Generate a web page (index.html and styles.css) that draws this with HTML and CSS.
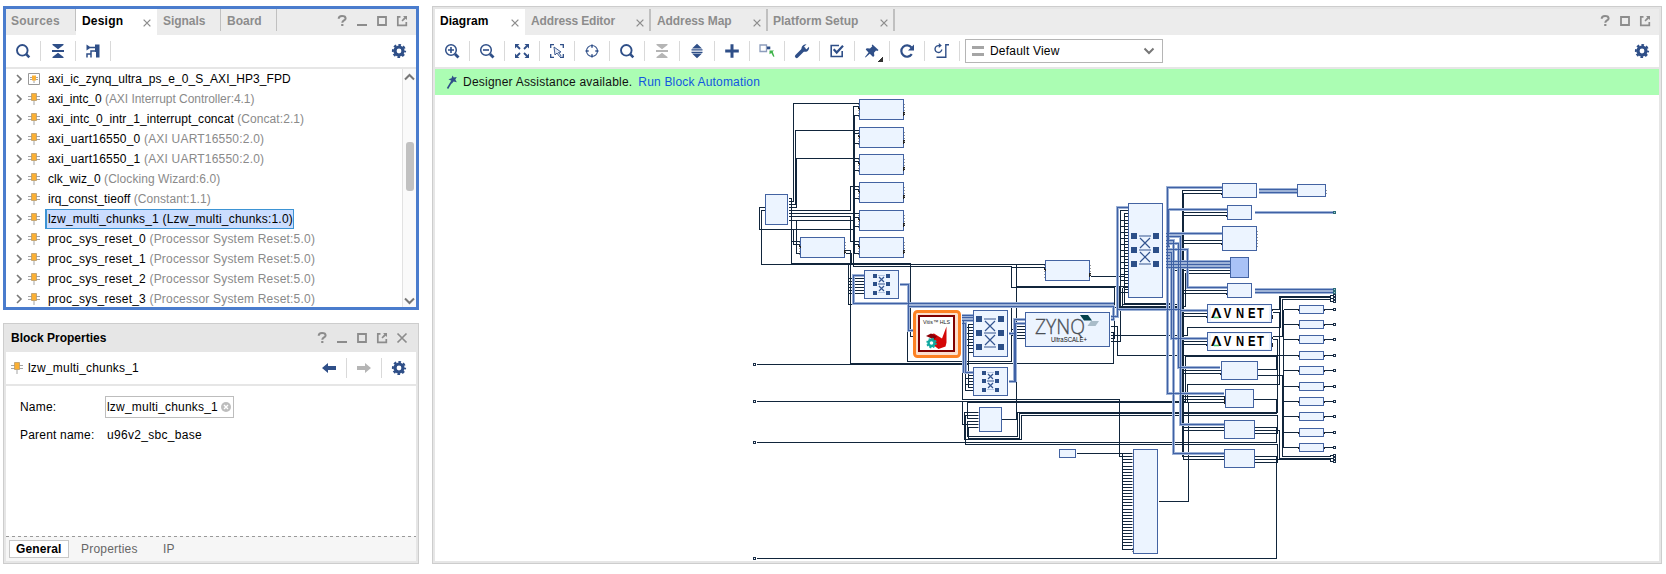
FILE: index.html
```
<!DOCTYPE html>
<html lang="en">
<head>
<meta charset="utf-8">
<title>Block Design</title>
<link rel="stylesheet" href="styles.css">
</head>
<body>
<svg class="sprite" width="0" height="0" aria-hidden="true">
  <defs>
    <symbol id="i-search" viewBox="0 0 16 16"><circle cx="7.3" cy="7.3" r="5.3" fill="none" stroke="currentColor" stroke-width="1.900"/><path d="M11.2 11.2L14.3 14.3" stroke="currentColor" stroke-width="2.600"/></symbol>
    <symbol id="i-zoomin" viewBox="0 0 16 16"><circle cx="7" cy="7" r="5.3" fill="none" stroke="currentColor" stroke-width="1.5"/><path d="M11 11L14.5 14.5" stroke="currentColor" stroke-width="2.8"/><path d="M4 7h6M7 4v6" stroke="currentColor" stroke-width="1.6"/></symbol>
    <symbol id="i-zoomout" viewBox="0 0 16 16"><circle cx="7" cy="7" r="5.3" fill="none" stroke="currentColor" stroke-width="1.5"/><path d="M11 11L14.5 14.5" stroke="currentColor" stroke-width="2.8"/><path d="M4 7h6" stroke="currentColor" stroke-width="1.6"/></symbol>
    <symbol id="i-collapse" viewBox="0 0 16 16"><path d="M2.5 1h11v1L8 6.2 2.5 2zM2.5 15h11v-1L8 9.8 2.500 14z" fill="currentColor"/><path d="M2 8h12" stroke="currentColor" stroke-width="2"/></symbol>
    <symbol id="i-expand" viewBox="0 0 16 16"><path d="M8 .8L13 5.500H3zM8 15.200L13 10.500H3z" fill="currentColor"/><path d="M2.500 6.900h11M2.500 9.300h11" stroke="currentColor" stroke-width="1.300"/></symbol>
    <symbol id="i-hier" viewBox="0 0 16 16"><path d="M1.500 1.500v6L6 4.500z" fill="currentColor"/><path d="M5 4.500h5M2 14.500V11h4v3.500M6 11V8h4" fill="none" stroke="currentColor" stroke-width="1.500"/><path d="M10 1.500h4.500v13H11V9H10z" fill="currentColor"/></symbol>
    <symbol id="i-fit" viewBox="0 0 16 16"><path d="M1 1h4.500L1 5.500zM15 1h-4.500L15 5.500zM1 15h4.500L1 10.500zM15 15h-4.500l4.500-4.500z" fill="currentColor"/><path d="M3 3l3 3M13 3l-3 3M3 13l3-3M13 13l-3-3" stroke="currentColor" stroke-width="1.800"/></symbol>
    <symbol id="i-select" viewBox="0 0 16 16"><path d="M1.700 5V1.700H5M11 1.700h3.300V5M1.700 11v3.300H5M14.300 11v3.300H11" fill="none" stroke="currentColor" stroke-width="1.300"/><path d="M5 4l1 8 2-2 2.500 3.500 1.500-1-2.500-3L12 9z" fill="#e5eaf4" stroke="currentColor" stroke-width=".9"/></symbol>
    <symbol id="i-target" viewBox="0 0 16 16"><circle cx="8" cy="8" r="5.500" fill="none" stroke="currentColor" stroke-width="1.100"/><path d="M8 1.500v3.200M8 11.300v3.200M1.500 8h3.200M11.300 8h3.200" stroke="currentColor" stroke-width="1.500"/></symbol>
    <symbol id="i-plus" viewBox="0 0 16 16"><path d="M8 1.200v13.600M1.200 8h13.600" stroke="currentColor" stroke-width="3"/></symbol>
    <symbol id="i-addip" viewBox="0 0 16 16"><path d="M1 2h6.500v6.500H1z" fill="none" stroke="#8d9dbc" stroke-width="1.300"/><path d="M8 3.500h3.300v2.800H8z" fill="currentColor"/><path d="M10.500 7.500H15l-1.300 1.300 1.800 4.700-1.200.3-2-3.800-1.800 1.300z" fill="#3eb34a"/></symbol>
    <symbol id="i-wrench" viewBox="0 0 16 16"><path d="M2.700 13.300L10 6" stroke="currentColor" stroke-width="3.600" stroke-linecap="round"/><path d="M12.500 1.200L10 3.700l.5 2 2 .5L15 3.700c.6 3-1.500 5.300-4.200 5C7 8 7 5 8.200 3.200 9.200 1.700 11 1 12.500 1.200z" fill="currentColor"/></symbol>
    <symbol id="i-check" viewBox="0 0 16 16"><path d="M13.200 8v5.500H2.200v-11H10" fill="none" stroke="currentColor" stroke-width="1.600"/><path d="M4.700 6.200l3 3.300L14 2.700" fill="none" stroke="currentColor" stroke-width="2.200"/></symbol>
    <symbol id="i-pin" viewBox="0 0 16 16"><path d="M8.500 1.500l6 5.500-1 1-1.500-.4-2 2.200.3 3-1.200 1.200-3.300-3.300L1.500 14.500 1 14l3.500-4.500L1.700 6.500l1-1.200 3.300.200 2.300-2.200-.6-1z" fill="currentColor"/></symbol>
    <symbol id="i-refresh" viewBox="0 0 16 16"><path d="M12.800 11.200A5.700 5.700 0 1 1 12.500 4.500" fill="none" stroke="currentColor" stroke-width="2.200"/><path d="M15 1.500V7.500H9z" fill="currentColor"/></symbol>
    <symbol id="i-route" viewBox="0 0 16 16"><path d="M7.800 6.500A3.400 3.400 0 1 1 5 2.700M15 1.700h-3.200v12.600H2.500" fill="none" stroke="currentColor" stroke-width="1.400"/><path d="M4.800 0l3 2.600-3 2.400z" fill="currentColor"/></symbol>
    <symbol id="i-gear" viewBox="0 0 16 16"><circle cx="8" cy="8" r="4" fill="none" stroke="currentColor" stroke-width="3.200"/><circle cx="8" cy="8" r="6.100" fill="none" stroke="currentColor" stroke-width="2" stroke-dasharray="2.600 2.191" stroke-dashoffset="1.300"/></symbol>
    <symbol id="i-back" viewBox="0 0 16 16"><path d="M1 8l6-5v3h8v4H7v3z" fill="currentColor"/></symbol>
    <symbol id="i-fwd" viewBox="0 0 16 16"><path d="M15 8L9 3v3H1v4h8v3z" fill="currentColor"/></symbol>
    <symbol id="i-help" viewBox="0 0 16 16"><path d="M4.700 5.800C4.700 3.500 6 3 8 3s3.600.6 3.600 2.400c0 2-3.300 2-3.300 4.300" fill="none" stroke="currentColor" stroke-width="2"/><path d="M7.200 11h2.200v2H7.200z" fill="currentColor"/></symbol>
    <symbol id="i-min" viewBox="0 0 16 16"><path d="M3 12h10" stroke="currentColor" stroke-width="2"/></symbol>
    <symbol id="i-max" viewBox="0 0 16 16"><path d="M4 4h8v8H4z" fill="none" stroke="currentColor" stroke-width="1.800"/></symbol>
    <symbol id="i-ext" viewBox="0 0 16 16"><path d="M6.500 3.800H3.800v8.500h8.500V9" fill="none" stroke="currentColor" stroke-width="1.700"/><path d="M9 3h4v4l-1.300-1.300L8.500 8.500 7.500 7.500l2.800-3.200z" fill="currentColor"/></symbol>
    <symbol id="i-close" viewBox="0 0 16 16"><path d="M3.500 3.500l9 9M12.500 3.500l-9 9" stroke="currentColor" stroke-width="1.700"/></symbol>
    <symbol id="i-chev" viewBox="0 0 8 10"><path d="M2 1l4 4-4 4" fill="none" stroke="#777" stroke-width="1.600"/></symbol>
    <symbol id="i-ip" viewBox="0 0 12 12"><path d="M0 3.500h12M0 6.500h12M6 8v4" stroke="#a5a5a5" stroke-width="1"/><path d="M3.500.5h5v7h-5z" fill="#fbb034" stroke="#b89a6a" stroke-width=".8"/></symbol>
    <symbol id="i-hip" viewBox="0 0 12 12"><path d="M.5.500h11v11H.5z" fill="#fff" stroke="#999"/><path d="M2 4.500h8M2 6.500h8M6 7v3" stroke="#999" stroke-width=".9"/><path d="M4 2.500h4v5H4z" fill="#fbb034"/></symbol>
    <symbol id="i-wand" viewBox="0 0 12 14"><path d="M1.500 13.500L6 6" stroke="currentColor" stroke-width="1.600"/><path d="M6.500.5l1.300 2 3-.6-1.500 2.600 1.500 2.700-3.200-.7L5.500 9 5.300 5.700 2.500 4.300l3-1z" fill="currentColor"/></symbol>
  </defs>
</svg>

<div class="app">
  <div class="side">
    <section class="panel design">
      <header class="tabs">
        <div class="tab t-sources">Sources</div>
        <div class="tab active t-design">Design<svg class="x"><use href="#i-close"/></svg></div>
        <div class="tab t-signals">Signals</div>
        <div class="tab t-board">Board</div>
        <div class="win"><svg><use href="#i-help"/></svg><svg><use href="#i-min"/></svg><svg><use href="#i-max"/></svg><svg><use href="#i-ext"/></svg></div>
      </header>
      <div class="toolbar">
        <span class="btn"><svg><use href="#i-search"/></svg></span>
        <span class="btn"><svg><use href="#i-collapse"/></svg></span>
        <span class="btn"><svg><use href="#i-hier"/></svg></span>
        <span class="gear"><svg><use href="#i-gear"/></svg></span>
      </div>
      <div class="treewrap">
        <ul class="tree">
          <li class="snug"><svg class="chev"><use href="#i-chev"/></svg><svg class="ip"><use href="#i-hip"/></svg><span class="lbl">axi_ic_zynq_ultra_ps_e_0_S_AXI_HP3_FPD</span></li>
          <li class="tight"><svg class="chev"><use href="#i-chev"/></svg><svg class="ip"><use href="#i-ip"/></svg><span class="lbl">axi_intc_0 <i>(AXI Interrupt Controller:4.1)</i></span></li>
          <li class="snug"><svg class="chev"><use href="#i-chev"/></svg><svg class="ip"><use href="#i-ip"/></svg><span class="lbl">axi_intc_0_intr_1_interrupt_concat <i>(Concat:2.1)</i></span></li>
          <li><svg class="chev"><use href="#i-chev"/></svg><svg class="ip"><use href="#i-ip"/></svg><span class="lbl">axi_uart16550_0 <i>(AXI UART16550:2.0)</i></span></li>
          <li><svg class="chev"><use href="#i-chev"/></svg><svg class="ip"><use href="#i-ip"/></svg><span class="lbl">axi_uart16550_1 <i>(AXI UART16550:2.0)</i></span></li>
          <li class="snug"><svg class="chev"><use href="#i-chev"/></svg><svg class="ip"><use href="#i-ip"/></svg><span class="lbl">clk_wiz_0 <i>(Clocking Wizard:6.0)</i></span></li>
          <li class="snug"><svg class="chev"><use href="#i-chev"/></svg><svg class="ip"><use href="#i-ip"/></svg><span class="lbl">irq_const_tieoff <i>(Constant:1.1)</i></span></li>
          <li><svg class="chev"><use href="#i-chev"/></svg><svg class="ip"><use href="#i-ip"/></svg><span class="lbl sel">lzw_multi_chunks_1 (Lzw_multi_chunks:1.0)</span></li>
          <li><svg class="chev"><use href="#i-chev"/></svg><svg class="ip"><use href="#i-ip"/></svg><span class="lbl">proc_sys_reset_0 <i>(Processor System Reset:5.0)</i></span></li>
          <li><svg class="chev"><use href="#i-chev"/></svg><svg class="ip"><use href="#i-ip"/></svg><span class="lbl">proc_sys_reset_1 <i>(Processor System Reset:5.0)</i></span></li>
          <li><svg class="chev"><use href="#i-chev"/></svg><svg class="ip"><use href="#i-ip"/></svg><span class="lbl">proc_sys_reset_2 <i>(Processor System Reset:5.0)</i></span></li>
          <li><svg class="chev"><use href="#i-chev"/></svg><svg class="ip"><use href="#i-ip"/></svg><span class="lbl">proc_sys_reset_3 <i>(Processor System Reset:5.0)</i></span></li>
        </ul>
        <div class="scroll">
          <svg viewBox="0 0 13 8"><path d="M2 6.500l4.500-4.500 4.500 4.500" /></svg>
          <div class="thumb"></div>
          <svg viewBox="0 0 13 8"><path d="M2 1.500l4.500 4.500 4.500-4.500"/></svg>
        </div>
      </div>
    </section>

    <section class="panel props">
      <header class="phead"><b>Block Properties</b>
        <div class="win"><svg><use href="#i-help"/></svg><svg><use href="#i-min"/></svg><svg><use href="#i-max"/></svg><svg><use href="#i-ext"/></svg><svg><use href="#i-close"/></svg></div>
      </header>
      <div class="toolbar ptool">
        <svg class="ip"><use href="#i-ip"/></svg><span class="pname">lzw_multi_chunks_1</span>
        <span class="btn nav"><svg><use href="#i-back"/></svg></span>
        <span class="btn off"><svg><use href="#i-fwd"/></svg></span>
        <span class="gear"><svg><use href="#i-gear"/></svg></span>
      </div>
      <div class="form">
        <span>Name:</span><span class="field">lzw_multi_chunks_1<svg viewBox="0 0 10 10"><circle cx="5" cy="5" r="5" fill="#bdbdbd"/><path d="M3 3l4 4M7 3l-4 4" stroke="#fff" stroke-width="1.400"/></svg></span>
        <span>Parent name:</span><span class="val">u96v2_sbc_base</span>
      </div>
      <footer class="ptabs"><span class="on">General</span><span class="p2">Properties</span><span class="p3">IP</span></footer>
    </section>
  </div>

  <section class="panel main">
    <header class="tabs">
      <div class="tab active d1">Diagram<svg class="x"><use href="#i-close"/></svg></div>
      <div class="tab d2">Address Editor<svg class="x"><use href="#i-close"/></svg></div>
      <div class="tab d3">Address Map<svg class="x"><use href="#i-close"/></svg></div>
      <div class="tab d4">Platform Setup<svg class="x"><use href="#i-close"/></svg></div>
      <div class="win"><svg><use href="#i-help"/></svg><svg><use href="#i-max"/></svg><svg><use href="#i-ext"/></svg></div>
    </header>
    <div class="toolbar">
      <span class="btn"><svg><use href="#i-zoomin"/></svg></span>
      <span class="btn"><svg><use href="#i-zoomout"/></svg></span>
      <span class="btn"><svg><use href="#i-fit"/></svg></span>
      <span class="btn"><svg><use href="#i-select"/></svg></span>
      <span class="btn"><svg><use href="#i-target"/></svg></span>
      <span class="btn"><svg><use href="#i-search"/></svg></span>
      <span class="btn off"><svg><use href="#i-collapse"/></svg></span>
      <span class="btn"><svg><use href="#i-expand"/></svg></span>
      <span class="btn"><svg><use href="#i-plus"/></svg></span>
      <span class="btn"><svg><use href="#i-addip"/></svg></span>
      <span class="btn"><svg><use href="#i-wrench"/></svg></span>
      <span class="btn"><svg><use href="#i-check"/></svg></span>
      <span class="btn more"><svg><use href="#i-pin"/></svg></span>
      <span class="btn"><svg><use href="#i-refresh"/></svg></span>
      <span class="btn"><svg><use href="#i-route"/></svg></span>
      <div class="combo"><span class="bars"></span><span>Default View</span><svg viewBox="0 0 12 8"><path d="M1.500 1.500L6 6l4.500-4.500"/></svg></div>
      <span class="gear"><svg><use href="#i-gear"/></svg></span>
    </div>
    <div class="assist"><svg><use href="#i-wand"/></svg><span class="a1">Designer Assistance available.</span><span class="a2">Run Block Automation</span></div>
    <svg class="canvas" viewBox="435 95 1224 466">
      <defs>
        <g id="bus">
          <path d="M864 275H853V303H1113M899 284H908V330H912M908 306H1113V319H1110"/>
          <path d="M961 315H972M961 317H972M961 320H972M961 323H965V372H972M963 320V372"/>
          <path d="M1008 381H1014V319H1025M1015 381V323H1025M1008 333H1013"/>
          <path d="M1128 207H1117V316H1110M1117 309H1180"/>
          <path d="M1222 187H1167V393H1223M1227 209H1168V246M1165 233H1222M1165 236H1180V424H1223"/>
          <path d="M1165 240H1173V453H1223M1165 243H1178V367H1219M1165 249H1187V287H1227"/>
          <path d="M1165 252H1171V338H1206M1165 246H1169M1165 255H1169M1165 258H1169M1165 261H1229M1165 264H1229M1165 267H1229M1180 310H1206"/>
          <path d="M1258 189H1297M1258 192H1297M1254 212H1333M1254 289H1333M1254 292H1333"/>
        </g>
        <g id="mem">
          <rect class="blk" width="44" height="20" rx="1"/>
          <path class="pg" d="M-1 4v13M45 4v12"/>
          <path class="pk" d="M-2 9h2M-1 10h1M-1 7v1M43 13h2M43 15h2M44 12v4"/>
        </g>
        <g id="io">
          <path class="w" d="M-3 4h2M25 4h9"/>
          <path class="pk" d="M-1 3v2M25 3v2"/>
          <rect class="blk" width="24" height="8"/>
          <rect class="port" x="34" y="3" width="2" height="2"/>
        </g>
        <g id="xbig">
          <path class="sq" d="M0 0h6v6H0zM22 0h6v6h-6zM0 14h6v6H0zM22 14h6v6h-6zM0 28h6v6H0zM22 28h6v6h-6z"/>
          <path class="xl" d="M8 3h12M8 17h12M8 31h12M9 5l10 10M19 5L9 15M9 19l10 10M19 19L9 29"/>
        </g>
        <g id="xsmall">
          <path class="sq" d="M0 0h4v4H0zM13 0h4v4h-4zM0 8h4v4H0zM13 8h4v4h-4zM0 17h4v4H0zM13 17h4v4h-4z"/>
          <path class="xf" d="M5 1.500h7M5 18.500h7"/>
          <path class="xl" d="M5 10h7M6 3l5 5M11 3L6 8M6 12l5 5M11 12L6 17"/>
        </g>
      </defs>
      <g transform="translate(.5 .5)" shape-rendering="crispEdges">
        <g class="w">
          <path d="M788 198H791V263H910V336H913M788 201H793V103H858M788 204H795V130H858M788 207H796V158H858M788 210H850V186H858M788 213H858M788 216H850V241H858M788 220H853M796 220V253H800M793 229V244H799M791 241H799"/>
          <path d="M765 207H759V229H853M765 210H761V264H1044M858 106H853V266H1011V287H1114V338H1110M858 115H854V253H858"/>
          <path d="M853 133h5M854 143h4M853 161h5M854 170h4M853 189h5M854 198h4M853 217h5M854 226h4M853 244h5"/>
          <path d="M845 250H850V363H1113V332H1110M845 253H851V264M848 263V304H853M907 304V361H1011V307H1183"/>
          <path d="M848 278h16m-16 3h16m-16 3h16m-16 3h16m-16 3h16m-16 3h16"/>
          <path d="M973 324H968V387H973M973 327H965V390H973M968 330h5m-8 3h8m-5 3h5m-8 3h8m-5 3h5m-8 3h8m-5 3h5m-5 4h5M968 375h5m-8 3h8m-5 3h5m-8 3h8"/>
          <path d="M961 349H962V399H1119V456H1132M962 401V424H978M756 364H968V352M756 401H1185M979 418H967V402H1187M756 442H1276V427H1254M756 558H1276V456H1254"/>
          <path d="M979 412H964V439H1021V415H1277V433H1254M979 415H965V444H1277V462H1254M979 421H967V436H1017V412H1277V339H1272M979 427H968V438H1019V413H1276V399H1253M1001 419H1016V338H1025M1016 264V326H1025M1011 329h14m-14 3h14m-14 3h14"/>
          <path d="M1011 267H1044M1016 286H1119V306H1185V273H1230M1090 276H1124M1128 210H1120V341H1110M1128 213H1124V303H1174V270H1230M1122 287V306M1122 304H1183M1122 287H1128M1119 286V307"/>
          <path d="M1124 216h4m-8 4h8m-4 3h4m-8 3h8m-4 3h4m-8 3h8m-4 3h4m-8 3h8m-4 3h4m-8 3h8m-4 3h4m-8 3h8m-4 3h4m-8 3h8m-4 3h4m-8 3h8m-4 3h4m-8 3h8m-4 3h4m-8 3h8m-4 3h4m-8 3h8m-4 3h4m-8 3h8m-4 3h4m-8 3h8"/>
          <path d="M1222 190H1182V456H1224M1222 193H1183V459H1224M1183 212h44m-44 3h44M1183 240h39m-39 3h39M1183 290h44m-44 3h44M1183 313h24m-24 3h24M1183 341h24m-24 3h24M1183 370h38m-38 3h38M1183 396h42m-42 3h42M1183 402h42M1183 427h41m-41 3h41"/>
          <path d="M1110 335H1187V327H1280V297H1330V298H1333M1110 326H1117V355H1299M1272 309H1279V296H1330V295H1333M1272 312H1279V384H1187V401M1272 336H1282V299H1330V301H1333"/>
          <path d="M1257 369H1276V356H1185V402M1257 375H1282V456H1330V455H1333M1283 309V447M1283 309h13m-13 15h13m-13 15h13m-13 31h13m-13 16h13m-13 15h13m-13 15h13m-13 16h13m-13 15h13"/>
          <path d="M1254 430H1279V458H1333M1254 459H1330V461H1333M1158 501H1188V402M1076 453H1132M1122 453V549"/>
          <path d="M1122 459h10m-10 3h10m-10 4h10m-10 3h10m-10 3h10m-10 3h10m-10 3h10m-10 3h10m-10 3h10m-10 3h10m-10 3h10m-10 3h10m-10 3h10m-10 3h10m-10 3h10m-10 3h10m-10 4h10m-10 3h10m-10 3h10m-10 3h10m-10 3h10m-10 3h10m-10 3h10m-10 3h10m-10 3h10m-10 3h10m-10 3h10m-10 3h10m-10 3h10m-10 4h10"/>
        </g>
        <use href="#bus" class="halo"/><use href="#bus" class="core"/>

        <use href="#mem" x="859" y="99"/><use href="#mem" x="859" y="127"/><use href="#mem" x="859" y="154"/>
        <use href="#mem" x="859" y="182"/><use href="#mem" x="859" y="210"/><use href="#mem" x="859" y="237"/>
        <use href="#mem" x="800" y="237"/><use href="#mem" x="1045" y="260"/>

        <g class="blk">
          <rect x="765" y="194" width="22" height="30" rx="1"/>
          <rect x="864" y="270" width="34" height="28" rx="1"/>
          <rect x="973" y="310" width="34" height="46" rx="1"/>
          <rect x="973" y="367" width="34" height="28" rx="1"/>
          <rect x="979" y="407" width="22" height="24" rx="1"/>
          <rect x="1025" y="312" width="84" height="34" rx="1"/>
          <rect x="1128" y="203" width="34" height="94"/>
          <rect x="1222" y="183" width="34" height="14"/>
          <rect x="1297" y="184" width="28" height="12"/>
          <rect x="1227" y="205" width="24" height="14"/>
          <rect x="1222" y="226" width="34" height="24"/>
          <rect x="1230" y="257" width="18" height="20" class="picked"/>
          <rect x="1227" y="283" width="24" height="14"/>
          <rect x="1207" y="304" width="64" height="18"/>
          <rect x="1207" y="332" width="64" height="18"/>
          <rect x="1221" y="361" width="36" height="18"/>
          <rect x="1225" y="389" width="28" height="18"/>
          <rect x="1224" y="420" width="30" height="18"/>
          <rect x="1224" y="449" width="30" height="18"/>
          <rect x="1133" y="449" width="24" height="104"/>
          <rect x="1059" y="449" width="16" height="8" rx="1"/>
        </g>
        <path class="pg" d="M978 411v18M1132 452v11M1132 465v41M1132 508v43M1257 230v18M1326 189v4"/>
        <path class="pk" d="M1221 193v1M1226 215v1M1221 243v1M1226 293v1M1206 316v1M1206 344v1M1220 373v1M1224 396v7M1272 314v4M1272 342v4M1272 308v2M1272 336v2M1158 501h2"/>

        <use href="#io" x="1299" y="305"/><use href="#io" x="1299" y="320"/><use href="#io" x="1299" y="335"/><use href="#io" x="1299" y="351"/><use href="#io" x="1299" y="366"/>
        <use href="#io" x="1299" y="382"/><use href="#io" x="1299" y="397"/><use href="#io" x="1299" y="412"/><use href="#io" x="1299" y="428"/><use href="#io" x="1299" y="443"/>
        <g class="port">
          <rect x="753" y="363" width="2" height="2"/><rect x="753" y="400" width="2" height="2"/><rect x="753" y="441" width="2" height="2"/><rect x="753" y="557" width="2" height="2"/>
          <rect x="1333" y="211" width="2" height="2" class="busport"/><rect x="1333" y="288" width="2" height="2" class="busport"/><rect x="1333" y="291" width="2" height="2" class="busport"/><rect x="1333" y="294" width="2" height="2"/><rect x="1333" y="297" width="2" height="2"/><rect x="1333" y="300" width="2" height="2"/>
          <rect x="1333" y="454" width="2" height="2"/><rect x="1333" y="457" width="2" height="2"/><rect x="1333" y="460" width="2" height="2"/>
        </g>
      </g>
      <use href="#xsmall" x="873" y="274"/>
      <use href="#xsmall" x="982" y="371"/>
      <use href="#xbig" x="976" y="316"/>
      <use href="#xbig" x="1131" y="233"/>

      <rect x="914.500" y="311.500" width="45" height="45" rx="3" fill="#fbe0cf" stroke="#fd8224" stroke-width="3"/>
      <rect x="919" y="316" width="35" height="35" fill="#fff" stroke="#800000" stroke-width="2"/>
      <text x="923" y="324" class="vitis" textLength="27" lengthAdjust="spacingAndGlyphs">Vitis™ HLS</text>
      <path d="M930 334.500l4-1 8 5 4.500-12v16l-1 4-7 2.500-4-3z" fill="#d40808"/><path d="M926 336l5-2.500 6 3-3 3z" fill="#8a0008"/>
      <circle cx="931.500" cy="343" r="3" fill="#fff" stroke="#10a8a0" stroke-width="2.400"/><circle cx="931.500" cy="343" r="4.500" fill="none" stroke="#10a8a0" stroke-width="1.500" stroke-dasharray="1.900 1.630"/>

      <text x="1035" y="334.300" class="zynq" textLength="50" lengthAdjust="spacingAndGlyphs">ZYNQ</text>
      <text x="1051" y="342" class="ultra" textLength="36" lengthAdjust="spacingAndGlyphs">UltraSCALE+</text>
      <path d="M1080 315h8l4 5.500h-8z" fill="#04414c"/><path d="M1091 321h8l-3.500 5h-8z" fill="#a9bcc9"/>

      <g fill="#fff"><rect x="1211" y="306" width="58" height="15"/><rect x="1211" y="334" width="58" height="15"/></g>
      <text class="avnet" transform="translate(1211 318) scale(.75 1)"><tspan x="0" textLength="14" lengthAdjust="spacingAndGlyphs">Λ</tspan><tspan x="17 33.300 49.300 61.500">VNET</tspan></text>
      <text class="avnet" transform="translate(1211 346) scale(.75 1)"><tspan x="0" textLength="14" lengthAdjust="spacingAndGlyphs">Λ</tspan><tspan x="17 33.300 49.300 61.500">VNET</tspan></text>
      <path d="M1214 317.500h5M1214 345.500h5" stroke="#45c063" stroke-width="1.600"/>
    </svg>
  </section>
</div>
</body>
</html>
```
FILE: styles.css
```
* { box-sizing: border-box; }
body {
  margin: 0;
  background: #fff;
  font: 12px/20px "Liberation Sans", Arial, sans-serif;
  letter-spacing: .2px;
  color: #000;
}
.sprite { display: block; }
.app { display: flex; gap: 13px; padding: 6px 0 0 3px; height: 574px; }
.side { display: flex; flex-direction: column; gap: 13px; width: 416px; }
svg { display: block; flex: none; }

.panel {
  display: flex;
  flex-direction: column;
  background: #fff;
  overflow: hidden;
}
.design { height: 304px; border: 3px solid #4a7ccd; }
.props { height: 241px; border: 1px solid #cdcdcd; box-shadow: inset 0 0 0 2px #e6e6e6; padding: 2px; }
.main { width: 1230px; height: 558px; border: 1px solid #cdcdcd; box-shadow: inset 0 0 0 2px #e6e6e6; padding: 2px; }

.tabs { display: flex; height: 26px; background: #ececec; flex: none; }
.tab {
  position: relative;
  height: 22px;
  line-height: 24px;
  padding-left: 6px;
  font-weight: bold;
  color: #8c8c8c;
  border-right: 1px solid #c0c0c0;
  white-space: nowrap;
}
.tab.active { height: 26px; background: #fff; color: #000; border-right: 0; }
.t-sources { width: 70px; padding-left: 5px; }
.t-design { width: 81px; }
.t-signals { width: 64px; letter-spacing: -.05px; }
.t-board { width: 56px; letter-spacing: 0; }
.d1 { width: 90px; padding-left: 5px; letter-spacing: .05px; }
.main .tab:not(.active) { border-right-width: 2px; }
.d2 { width: 126px; letter-spacing: -.15px; }
.d3 { width: 117px; letter-spacing: -.08px; }
.d4 { width: 127px; padding-left: 5px; letter-spacing: 0; }
.tab .x { position: absolute; right: 3px; top: 8px; width: 12px; height: 12px; color: #8c8c8c; }
.t-design .x, .d1 .x { right: 4px; }

.win { margin-left: auto; display: flex; gap: 4px; align-items: center; padding-right: 6px; color: #8c8c8c; }
.win svg { width: 16px; height: 16px; margin-top: -2px; }

.toolbar {
  display: flex;
  align-items: center;
  height: 34px;
  flex: none;
  border-bottom: 2px solid #e6e6e6;
  color: #2f4f88;
}
.btn { width: 35px; height: 20px; display: flex; align-items: center; justify-content: center; border-right: 1px solid #d9d9d9; position: relative; }
.btn svg, .gear svg { width: 16px; height: 16px; }
.btn.off { color: #b5b5b5; }
.btn.more::after { content: ""; position: absolute; right: 6px; bottom: -1px; width: 5px; height: 5px; background: linear-gradient(135deg, transparent 50%, #333 50%); }
.gear { margin-left: auto; margin-right: 9px; }

.treewrap { display: flex; flex: 1; min-height: 0; }
.tree { list-style: none; margin: 0; padding: 0; flex: 1; overflow: hidden; }
.tree li { display: flex; align-items: center; height: 20px; white-space: nowrap; }
.tree .snug { letter-spacing: .07px; }
.tree .tight { letter-spacing: -.04px; }
.chev { width: 8px; height: 10px; margin-left: 9px; margin-right: 5px; }
.ip { width: 12px; height: 12px; }
.lbl { padding-left: 3px; margin-left: 5px; height: 20px; border: 1px solid transparent; border-width: 1px 1px 1px 0; line-height: 18px; }
.lbl i { font-style: normal; color: #8a8a8a; }
.lbl.sel { background: #cbddff; border: 1px solid #3d94d4; border-left-width: 2px; padding-left: 1px; }
.scroll { width: 14px; border-left: 1px solid #e2e2e2; display: flex; flex-direction: column; align-items: center; justify-content: space-between; padding: 4px 0 2px; background: #fafafa; }
.scroll svg { width: 13px; height: 8px; fill: none; stroke: #777; stroke-width: 2; }
.thumb { width: 8px; height: 49px; border-radius: 3px; background: #c1c1c1; margin: 61px 0 auto; }

.phead { display: flex; height: 26px; background: #e6e6e6; padding-left: 5px; line-height: 24px; letter-spacing: 0; flex: none; }
.ptool .ip { margin-left: 5px; margin-right: 5px; }
.ptool .pname { color: #000; }
.ptool .nav { margin-left: auto; }
.ptool .gear { margin-left: 9px; }
.form { flex: 1; display: grid; grid-template-columns: 85px max-content; grid-template-rows: 22px 20px; row-gap: 7px; align-items: center; align-content: start; padding: 10px 0 0 14px; }
.field { display: flex; align-items: center; gap: 3px; height: 22px; width: 129px; border: 1px solid #bdbdbd; padding-left: 1px; white-space: nowrap; }
.field svg { width: 10px; height: 10px; }
.val { padding-left: 2px; letter-spacing: .3px; }
.ptabs { display: flex; align-items: center; height: 25px; background: #f6f6f6; color: #666; padding-left: 3px; background-image: repeating-linear-gradient(90deg, #999 0 3px, #f6f6f6 3px 6px); background-size: 100% 1px; background-repeat: no-repeat; }
.ptabs .on { font-weight: bold; color: #000; background: #fff; border: 1px solid #c8c8c8; width: 60px; height: 18px; line-height: 16px; padding-left: 6px; letter-spacing: .1px; }
.p2 { margin-left: 12px; width: 82px; }

.combo { display: flex; align-items: center; width: 198px; height: 24px; margin-left: 5px; border: 1px solid #b5b5b5; color: #000; padding: 0 7px 0 6px; }
.combo .bars { width: 12px; height: 10px; border: solid #a5a5a5; border-width: 3px 0; margin-right: 6px; }
.combo svg { width: 12px; height: 8px; margin-left: auto; fill: none; stroke: #777; stroke-width: 2; }
.assist { display: flex; align-items: center; height: 26px; flex: none; background: #abfdb3; padding-left: 11px; color: #111; letter-spacing: .22px; }
.assist svg { width: 12px; height: 14px; color: #2f4f88; margin-right: 5px; }
.assist .a2 { margin-left: 6px; color: #1257e0; letter-spacing: .18px; }

.canvas { width: 1224px; height: 466px; }
.w { fill: none; stroke: #11253b; }
.halo { fill: none; stroke: #9db2d6; stroke-width: 3; }
.core { fill: none; stroke: #3f61a5; }
.blk { fill: #ecf4ff; stroke: #4363a2; }
.blk .picked { fill: #a9c2f6; }
.pg { fill: none; stroke: #999; stroke-dasharray: 1 2; }
.pk { fill: none; stroke: #222; }
.port { fill: #fff; stroke: #1b2f48; }
.port .busport { fill: #9fd0cc; stroke: #2c6b78; }
.sq { fill: #2c4f88; }
.xl { fill: none; stroke: #345590; stroke-width: 1.2; }
.xf { fill: none; stroke: #b5c6e2; }
.vitis { font-size: 6px; letter-spacing: 0; fill: #222; }
.zynq { font: 300 19.5px "Open Sans", sans-serif; letter-spacing: 0; fill: #4a4f56; stroke: #4a4f56; stroke-width: .3; }
.ultra { font-size: 6.5px; letter-spacing: 0; fill: #111; }
.avnet { font: bold 15px "Liberation Sans", sans-serif; letter-spacing: 0; fill: #000; }
```
